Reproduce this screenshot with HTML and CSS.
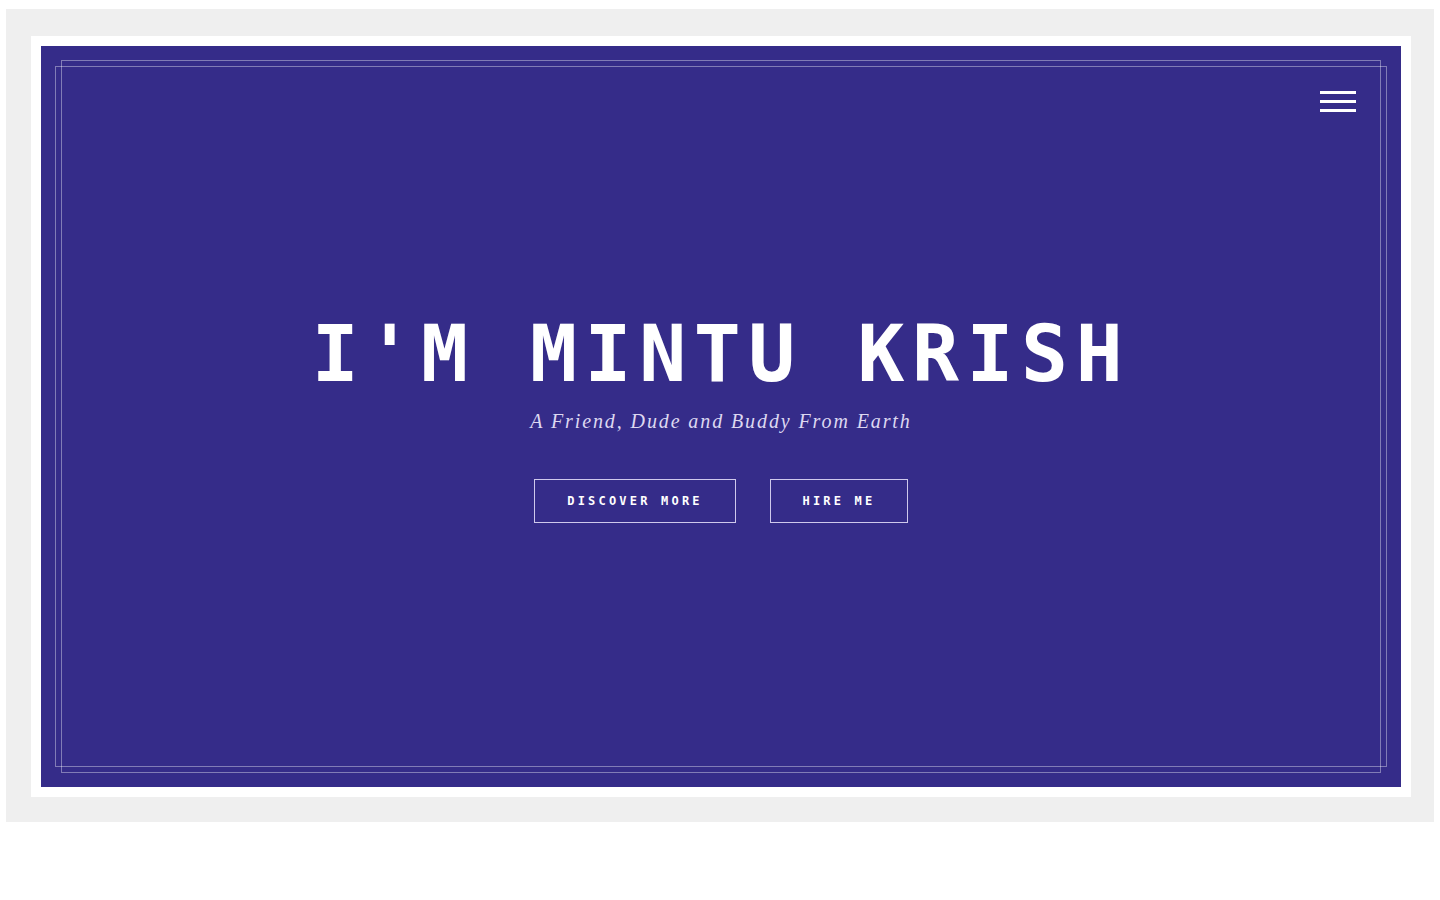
FILE: index.html
```html
<!DOCTYPE html>
<html lang="en">
<head>
<meta charset="utf-8">
<title>Mintu Krish</title>
<link rel="stylesheet" href="styles.css">
</head>
<body>
<div class="page">
  <div class="outer">
    <div class="card">
      <section class="hero">
        <button class="menu" aria-label="Menu">
          <span class="bar"></span>
          <span class="bar"></span>
          <span class="bar"></span>
        </button>
        <div class="content">
          <h1 class="title">I'M MINTU KRISH</h1>
          <p class="subtitle">A Friend, Dude and Buddy From Earth</p>
          <div class="actions">
            <a class="btn btn-discover" href="#">DISCOVER MORE</a>
            <a class="btn btn-hire" href="#">HIRE ME</a>
          </div>
        </div>
      </section>
    </div>
  </div>
</div>
</body>
</html>
```
FILE: styles.css
```css
html, body {
  margin: 0;
  padding: 0;
  background: #ffffff;
}

.page {
  padding: 9px 6px 0;
}

.outer {
  background: #efefef;
  padding: 27px 23px 25px 25px;
}

.card {
  background: #ffffff;
  padding: 10px;
}

.hero {
  position: relative;
  height: 741px;
  background: #352c89;
  display: flex;
  align-items: center;
  justify-content: center;
}

.hero::before,
.hero::after {
  content: "";
  position: absolute;
  border: 1px solid rgba(255, 255, 255, 0.38);
  pointer-events: none;
}

.hero::before {
  top: 14px;
  bottom: 14px;
  left: 20px;
  right: 20px;
}

.hero::after {
  top: 20px;
  bottom: 20px;
  left: 14px;
  right: 14px;
}

.menu {
  position: absolute;
  top: 45px;
  right: 45px;
  width: 36px;
  padding: 0;
  border: 0;
  background: transparent;
  display: flex;
  flex-direction: column;
  gap: 6px;
  z-index: 2;
}

.bar {
  display: block;
  height: 3px;
  background: #ffffff;
}

.content {
  position: relative;
  z-index: 1;
  display: flex;
  flex-direction: column;
  align-items: center;
  margin-top: -2px;
}

.title {
  margin: 0;
  font-family: "DejaVu Sans Mono", "Liberation Mono", monospace;
  font-weight: 700;
  font-size: 78px;
  line-height: 90px;
  letter-spacing: 7.6px;
  color: #ffffff;
}

.subtitle {
  margin: 8px 0 0;
  font-family: "Liberation Serif", serif;
  font-style: italic;
  font-size: 20px;
  line-height: 28px;
  letter-spacing: 1.9px;
  color: #ddd8f1;
}

.actions {
  display: flex;
  gap: 34px;
  margin-top: 44px;
}

.btn {
  display: flex;
  align-items: center;
  justify-content: center;
  height: 44px;
  box-sizing: border-box;
  border: 1px solid #cfc9ec;
  font-family: "DejaVu Sans Mono", "Liberation Mono", monospace;
  font-weight: 700;
  font-size: 12px;
  letter-spacing: 3.2px;
  color: #ffffff;
  text-decoration: none;
}

.btn-discover {
  width: 202px;
}

.btn-hire {
  width: 138px;
}
```
